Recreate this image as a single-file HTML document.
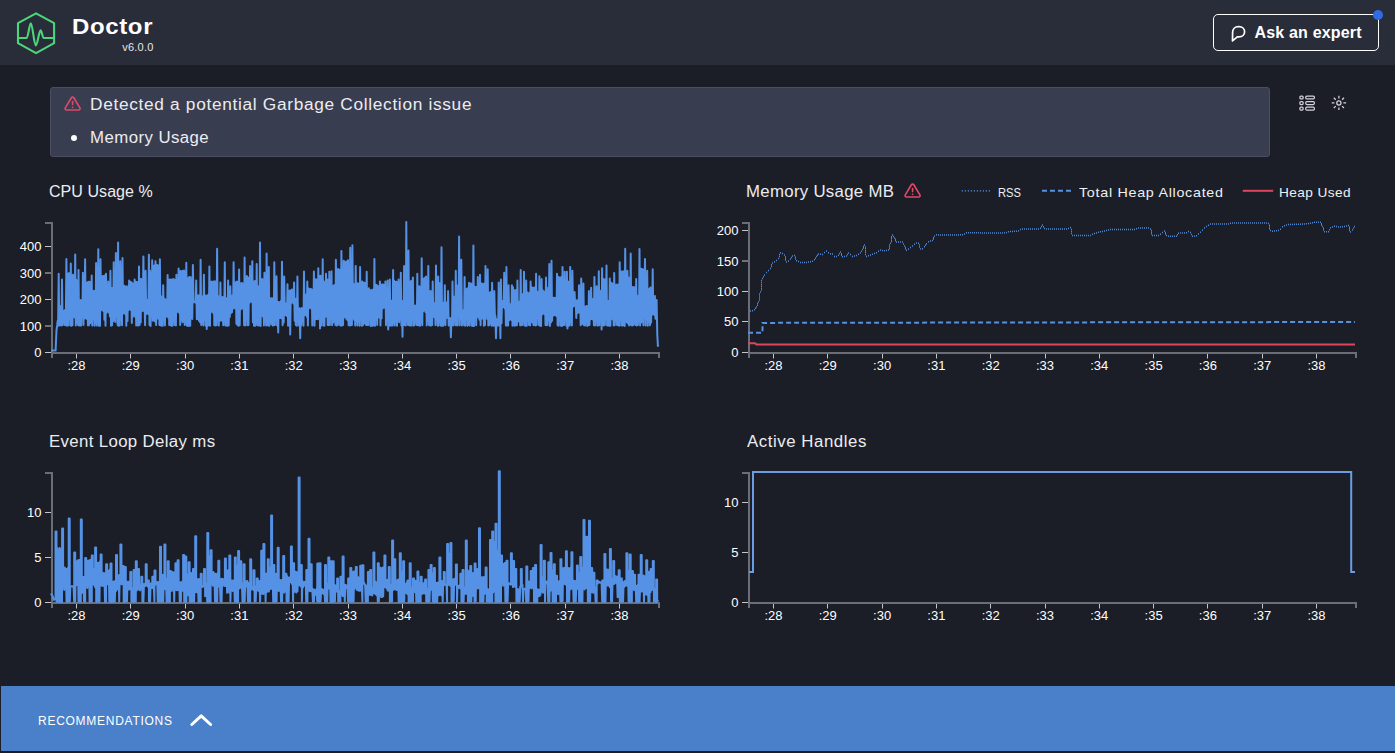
<!DOCTYPE html>
<html lang="en">
<head>
<meta charset="utf-8">
<title>Clinic.js Doctor</title>
<style>
*{box-sizing:border-box;margin:0;padding:0}
html,body{width:1395px;height:753px;overflow:hidden;background:#1b1e27;color:#fff;font-family:"Liberation Sans",sans-serif}
body{position:relative}
.abs{position:absolute}
#header{position:absolute;left:0;top:0;width:1395px;height:65px;background:#292d39}
#logo{position:absolute;left:0;top:0}
#title{position:absolute;left:72px;top:12.7px;font-weight:bold;font-size:22.3px;line-height:28px;letter-spacing:0.6px;white-space:nowrap;transform:scaleX(1.075);transform-origin:left center}
#version{position:absolute;left:99.6px;width:54px;text-align:right;top:41px;font-size:11px;line-height:13px;color:#e6e6e9;white-space:nowrap;letter-spacing:0.24px}
#ask{position:absolute;left:1213px;top:14px;width:166px;height:37px;border:1px solid #fff;border-radius:5px}
#ask span{position:absolute;left:40.5px;top:8px;font-weight:bold;font-size:16px;line-height:20px;white-space:nowrap;letter-spacing:0.18px}
#ask svg{position:absolute;left:15px;top:9px}
#dot{position:absolute;left:1373.3px;top:10.2px;width:10px;height:10px;border-radius:50%;background:#2f6be3}
#alert{position:absolute;left:50px;top:87px;width:1220px;height:70px;background:#393d50;border:1px solid #4a4e60;border-radius:3px}
#alert .t1{color:#ececf0;position:absolute;left:39px;top:7px;font-size:16px;line-height:20px;white-space:nowrap;letter-spacing:0.63px;transform:scaleX(1.08);transform-origin:left center}
#alert .t2{color:#ececf0;position:absolute;left:39px;top:40px;font-size:16px;line-height:20px;white-space:nowrap;letter-spacing:0.414px;transform:scaleX(1.05);transform-origin:left center}
#alert .bullet{position:absolute;left:20px;top:47px;width:6px;height:6px;border-radius:50%;background:#fff}
.ctitle{position:absolute;font-size:16px;line-height:20px;white-space:nowrap;color:#ececf0;transform-origin:left center}
.leg{position:absolute;font-size:13px;line-height:16px;white-space:nowrap;color:#f0f0f3;transform-origin:left center}
#reco{position:absolute;left:1px;top:686px;width:1394px;height:65px;background:#4980c9}
#reco span{position:absolute;left:37px;top:28px;font-size:12px;line-height:14px;letter-spacing:0.73px;white-space:nowrap;color:#fff}
#reco svg{position:absolute;left:187px;top:24px}
svg text{font-family:"Liberation Sans",sans-serif;font-size:13px;fill:#fff}
</style>
</head>
<body>
<div id="header">
  <svg id="logo" width="70" height="65" viewBox="0 0 70 65" fill="none" stroke="#4cd67a" stroke-width="2.1" stroke-linejoin="round" stroke-linecap="round">
    <path d="M36.05 13.3 L54.1 23.2 V43.2 L36.05 53.1 L18 43.2 V23.2 Z"/>
    <path d="M18 38 H26.6 C28.2 38 29.4 23.3 30.8 23.3 C32.6 23.3 34 45.4 35.8 45.4 C37.5 45.4 39 30.3 40.6 30.3 C41.8 30.3 42.4 38 43.7 38 H54.1"/>
  </svg>
  <div id="title">Doctor</div>
  <div id="version">v6.0.0</div>
  <div id="ask">
    <svg width="20" height="20" viewBox="0 0 20 20" fill="none" stroke="#fff" stroke-width="1.7" stroke-linejoin="round" stroke-linecap="round"><path d="M3.5 16.9 L3.6 8.4 C3.6 5 6 2.7 9.4 2.7 H10 C13.3 2.7 15.6 4.8 15.6 7.8 C15.6 10.8 13.3 12.9 10 12.9 H8.3 Z"/></svg>
    <span>Ask an expert</span>
  </div>
  <div id="dot"></div>
</div>
<div id="alert">
  <svg class="abs" style="left:13.3px;top:7.3px" width="17.2" height="17.2" viewBox="0 0 24 24" fill="none" stroke="#dd4a68" stroke-width="2.3" stroke-linejoin="round" stroke-linecap="round"><path d="M10.29 3.86L1.82 18a2 2 0 0 0 1.71 3h16.94a2 2 0 0 0 1.71-3L13.71 3.86a2 2 0 0 0-3.42 0z"/><path d="M12 9.2v4.2"/><path d="M12 17.2v0.1"/></svg>
  <div class="t1">Detected a potential Garbage Collection issue</div>
  <div class="bullet"></div>
  <div class="t2">Memory Usage</div>
</div>
<svg class="abs" style="left:1290px;top:88px" width="70" height="32" viewBox="0 0 70 32" fill="none" stroke="#d4d4da" stroke-width="1.25">
  <rect x="9.9" y="8.0" width="3.2" height="2.9" rx="1"/><rect x="15.7" y="8.0" width="8.7" height="2.9" rx="1.2"/><rect x="9.9" y="13.6" width="3.2" height="2.9" rx="1"/><rect x="15.7" y="13.6" width="8.7" height="2.9" rx="1.2"/><rect x="9.9" y="19.2" width="3.2" height="2.9" rx="1"/><rect x="15.7" y="19.2" width="8.7" height="2.9" rx="1.2"/>
  <circle cx="48.9" cy="14.9" r="2.1"/>
  <path d="M53.40 14.90L56.10 14.90M52.08 18.08L53.99 19.99M48.90 19.40L48.90 22.10M45.72 18.08L43.81 19.99M44.40 14.90L41.70 14.90M45.72 11.72L43.81 9.81M48.90 10.40L48.90 7.70M52.08 11.72L53.99 9.81"/>
</svg>

<div class="ctitle" style="left:49px;top:182px;letter-spacing:0.06px">CPU Usage %</div>
<div class="ctitle" style="left:746px;top:182px;letter-spacing:0.286px;transform:scaleX(1.05)">Memory Usage MB</div>
<svg class="abs" style="left:904.3px;top:182.3px" width="17.2" height="17.2" viewBox="0 0 24 24" fill="none" stroke="#dd4a68" stroke-width="2.3" stroke-linejoin="round" stroke-linecap="round"><path d="M10.29 3.86L1.82 18a2 2 0 0 0 1.71 3h16.94a2 2 0 0 0 1.71-3L13.71 3.86a2 2 0 0 0-3.42 0z"/><path d="M12 9.2v4.2"/><path d="M12 17.2v0.1"/></svg>
<div class="ctitle" style="left:49px;top:432px;letter-spacing:0.336px;transform:scaleX(1.05)">Event Loop Delay ms</div>
<div class="ctitle" style="left:746.6px;top:432px;letter-spacing:0.53px;transform:scaleX(1.05)">Active Handles</div>

<div class="leg" style="left:998px;top:185px;transform:scaleX(0.86)">RSS</div>
<div class="leg" style="left:1078.6px;top:185px;letter-spacing:0.65px;transform:scaleX(1.1)">Total Heap Allocated</div>
<div class="leg" style="left:1279px;top:185px;letter-spacing:0.39px;transform:scaleX(1.05)">Heap Used</div>

<svg class="abs" style="left:0;top:0" width="1395" height="753" viewBox="0 0 1395 753">
<path d="M45 352.5H51" stroke="#c4c5cb" stroke-width="1"/>
<text x="41.4" y="357.2" text-anchor="end">0</text>
<path d="M45 326H51" stroke="#c4c5cb" stroke-width="1"/>
<text x="41.4" y="330.7" text-anchor="end">100</text>
<path d="M45 299.5H51" stroke="#c4c5cb" stroke-width="1"/>
<text x="41.4" y="304.2" text-anchor="end">200</text>
<path d="M45 273H51" stroke="#c4c5cb" stroke-width="1"/>
<text x="41.4" y="277.7" text-anchor="end">300</text>
<path d="M45 246.5H51" stroke="#c4c5cb" stroke-width="1"/>
<text x="41.4" y="251.2" text-anchor="end">400</text>
<path d="M76.5 353V358.5" stroke="#c4c5cb" stroke-width="1"/>
<text x="76.5" y="370.2" text-anchor="middle">:28</text>
<path d="M130.5 353V358.5" stroke="#c4c5cb" stroke-width="1"/>
<text x="130.8" y="370.2" text-anchor="middle">:29</text>
<path d="M185.5 353V358.5" stroke="#c4c5cb" stroke-width="1"/>
<text x="185.1" y="370.2" text-anchor="middle">:30</text>
<path d="M239.5 353V358.5" stroke="#c4c5cb" stroke-width="1"/>
<text x="239.4" y="370.2" text-anchor="middle">:31</text>
<path d="M293.5 353V358.5" stroke="#c4c5cb" stroke-width="1"/>
<text x="293.7" y="370.2" text-anchor="middle">:32</text>
<path d="M348.5 353V358.5" stroke="#c4c5cb" stroke-width="1"/>
<text x="348.0" y="370.2" text-anchor="middle">:33</text>
<path d="M402.5 353V358.5" stroke="#c4c5cb" stroke-width="1"/>
<text x="402.3" y="370.2" text-anchor="middle">:34</text>
<path d="M456.5 353V358.5" stroke="#c4c5cb" stroke-width="1"/>
<text x="456.6" y="370.2" text-anchor="middle">:35</text>
<path d="M510.5 353V358.5" stroke="#c4c5cb" stroke-width="1"/>
<text x="510.9" y="370.2" text-anchor="middle">:36</text>
<path d="M565.5 353V358.5" stroke="#c4c5cb" stroke-width="1"/>
<text x="565.2" y="370.2" text-anchor="middle">:37</text>
<path d="M619.5 353V358.5" stroke="#c4c5cb" stroke-width="1"/>
<text x="619.5" y="370.2" text-anchor="middle">:38</text>
<path d="M45 223H52V353" fill="none" stroke="#6c6e77" stroke-width="2"/>
<path d="M52 358V353H659V358" fill="none" stroke="#6c6e77" stroke-width="2"/>
<path d="M742 352.5H748" stroke="#c4c5cb" stroke-width="1"/>
<text x="738.4" y="357.2" text-anchor="end">0</text>
<path d="M742 321.5H748" stroke="#c4c5cb" stroke-width="1"/>
<text x="738.4" y="326.2" text-anchor="end">50</text>
<path d="M742 291.5H748" stroke="#c4c5cb" stroke-width="1"/>
<text x="738.4" y="296.2" text-anchor="end">100</text>
<path d="M742 261H748" stroke="#c4c5cb" stroke-width="1"/>
<text x="738.4" y="265.7" text-anchor="end">150</text>
<path d="M742 230.5H748" stroke="#c4c5cb" stroke-width="1"/>
<text x="738.4" y="235.2" text-anchor="end">200</text>
<path d="M773.5 353V358.5" stroke="#c4c5cb" stroke-width="1"/>
<text x="773.5" y="370.2" text-anchor="middle">:28</text>
<path d="M827.5 353V358.5" stroke="#c4c5cb" stroke-width="1"/>
<text x="827.8" y="370.2" text-anchor="middle">:29</text>
<path d="M882.5 353V358.5" stroke="#c4c5cb" stroke-width="1"/>
<text x="882.1" y="370.2" text-anchor="middle">:30</text>
<path d="M936.5 353V358.5" stroke="#c4c5cb" stroke-width="1"/>
<text x="936.4" y="370.2" text-anchor="middle">:31</text>
<path d="M990.5 353V358.5" stroke="#c4c5cb" stroke-width="1"/>
<text x="990.7" y="370.2" text-anchor="middle">:32</text>
<path d="M1045.5 353V358.5" stroke="#c4c5cb" stroke-width="1"/>
<text x="1045.0" y="370.2" text-anchor="middle">:33</text>
<path d="M1099.5 353V358.5" stroke="#c4c5cb" stroke-width="1"/>
<text x="1099.3" y="370.2" text-anchor="middle">:34</text>
<path d="M1153.5 353V358.5" stroke="#c4c5cb" stroke-width="1"/>
<text x="1153.6" y="370.2" text-anchor="middle">:35</text>
<path d="M1207.5 353V358.5" stroke="#c4c5cb" stroke-width="1"/>
<text x="1207.9" y="370.2" text-anchor="middle">:36</text>
<path d="M1262.5 353V358.5" stroke="#c4c5cb" stroke-width="1"/>
<text x="1262.2" y="370.2" text-anchor="middle">:37</text>
<path d="M1316.5 353V358.5" stroke="#c4c5cb" stroke-width="1"/>
<text x="1316.5" y="370.2" text-anchor="middle">:38</text>
<path d="M742 223H749V353" fill="none" stroke="#6c6e77" stroke-width="2"/>
<path d="M749 358V353H1356V358" fill="none" stroke="#6c6e77" stroke-width="2"/>
<path d="M45 602.5H51" stroke="#c4c5cb" stroke-width="1"/>
<text x="41.4" y="607.2" text-anchor="end">0</text>
<path d="M45 557.5H51" stroke="#c4c5cb" stroke-width="1"/>
<text x="41.4" y="562.2" text-anchor="end">5</text>
<path d="M45 512.5H51" stroke="#c4c5cb" stroke-width="1"/>
<text x="41.4" y="517.2" text-anchor="end">10</text>
<path d="M76.5 603V608.5" stroke="#c4c5cb" stroke-width="1"/>
<text x="76.5" y="620.2" text-anchor="middle">:28</text>
<path d="M130.5 603V608.5" stroke="#c4c5cb" stroke-width="1"/>
<text x="130.8" y="620.2" text-anchor="middle">:29</text>
<path d="M185.5 603V608.5" stroke="#c4c5cb" stroke-width="1"/>
<text x="185.1" y="620.2" text-anchor="middle">:30</text>
<path d="M239.5 603V608.5" stroke="#c4c5cb" stroke-width="1"/>
<text x="239.4" y="620.2" text-anchor="middle">:31</text>
<path d="M293.5 603V608.5" stroke="#c4c5cb" stroke-width="1"/>
<text x="293.7" y="620.2" text-anchor="middle">:32</text>
<path d="M348.5 603V608.5" stroke="#c4c5cb" stroke-width="1"/>
<text x="348.0" y="620.2" text-anchor="middle">:33</text>
<path d="M402.5 603V608.5" stroke="#c4c5cb" stroke-width="1"/>
<text x="402.3" y="620.2" text-anchor="middle">:34</text>
<path d="M456.5 603V608.5" stroke="#c4c5cb" stroke-width="1"/>
<text x="456.6" y="620.2" text-anchor="middle">:35</text>
<path d="M510.5 603V608.5" stroke="#c4c5cb" stroke-width="1"/>
<text x="510.9" y="620.2" text-anchor="middle">:36</text>
<path d="M565.5 603V608.5" stroke="#c4c5cb" stroke-width="1"/>
<text x="565.2" y="620.2" text-anchor="middle">:37</text>
<path d="M619.5 603V608.5" stroke="#c4c5cb" stroke-width="1"/>
<text x="619.5" y="620.2" text-anchor="middle">:38</text>
<path d="M45 473H52V603" fill="none" stroke="#6c6e77" stroke-width="2"/>
<path d="M52 608V603H659V608" fill="none" stroke="#6c6e77" stroke-width="2"/>
<path d="M742 602.5H748" stroke="#c4c5cb" stroke-width="1"/>
<text x="738.4" y="607.2" text-anchor="end">0</text>
<path d="M742 552.5H748" stroke="#c4c5cb" stroke-width="1"/>
<text x="738.4" y="557.2" text-anchor="end">5</text>
<path d="M742 502.5H748" stroke="#c4c5cb" stroke-width="1"/>
<text x="738.4" y="507.2" text-anchor="end">10</text>
<path d="M773.5 603V608.5" stroke="#c4c5cb" stroke-width="1"/>
<text x="773.5" y="620.2" text-anchor="middle">:28</text>
<path d="M827.5 603V608.5" stroke="#c4c5cb" stroke-width="1"/>
<text x="827.8" y="620.2" text-anchor="middle">:29</text>
<path d="M882.5 603V608.5" stroke="#c4c5cb" stroke-width="1"/>
<text x="882.1" y="620.2" text-anchor="middle">:30</text>
<path d="M936.5 603V608.5" stroke="#c4c5cb" stroke-width="1"/>
<text x="936.4" y="620.2" text-anchor="middle">:31</text>
<path d="M990.5 603V608.5" stroke="#c4c5cb" stroke-width="1"/>
<text x="990.7" y="620.2" text-anchor="middle">:32</text>
<path d="M1045.5 603V608.5" stroke="#c4c5cb" stroke-width="1"/>
<text x="1045.0" y="620.2" text-anchor="middle">:33</text>
<path d="M1099.5 603V608.5" stroke="#c4c5cb" stroke-width="1"/>
<text x="1099.3" y="620.2" text-anchor="middle">:34</text>
<path d="M1153.5 603V608.5" stroke="#c4c5cb" stroke-width="1"/>
<text x="1153.6" y="620.2" text-anchor="middle">:35</text>
<path d="M1207.5 603V608.5" stroke="#c4c5cb" stroke-width="1"/>
<text x="1207.9" y="620.2" text-anchor="middle">:36</text>
<path d="M1262.5 603V608.5" stroke="#c4c5cb" stroke-width="1"/>
<text x="1262.2" y="620.2" text-anchor="middle">:37</text>
<path d="M1316.5 603V608.5" stroke="#c4c5cb" stroke-width="1"/>
<text x="1316.5" y="620.2" text-anchor="middle">:38</text>
<path d="M742 473H749V603" fill="none" stroke="#6c6e77" stroke-width="2"/>
<path d="M749 608V603H1356V608" fill="none" stroke="#6c6e77" stroke-width="2"/>
<path d="M961.8 190.8H990.4" stroke="#5591e4" stroke-width="1.2" stroke-dasharray="1.2 1.8"/>
<path d="M1042 190.8H1071.5" stroke="#5591e4" stroke-width="2" stroke-dasharray="5 3"/>
<path d="M1242.8 190.8H1273.2" stroke="#e0445f" stroke-width="2"/>
<path d="M749 572H753V472H1351.2V572H1355" fill="none" stroke="#6c9de3" stroke-width="2"/>
<path d="M51.0 350.6L55.6 350.6L56.5 330.0L57.2 325.4L57.6 321.0L58.1 325.8L58.7 273.7L59.2 325.4L59.8 306.0L60.4 325.2L60.9 307.3L61.5 325.5L62.0 279.5L62.6 325.1L63.1 310.7L63.7 321.3L64.2 310.8L64.8 324.9L65.3 309.8L65.8 325.2L66.4 258.9L67.0 325.8L67.5 273.5L68.0 325.4L68.6 273.2L69.2 319.2L69.7 273.3L70.2 325.5L70.8 263.5L71.4 325.8L71.9 275.4L72.5 325.3L73.0 274.8L73.5 317.1L74.1 276.6L74.7 317.5L75.2 254.5L75.8 325.4L76.3 279.7L76.8 322.6L77.4 281.4L78.0 324.9L78.5 269.9L79.1 325.5L79.6 301.2L80.2 325.5L80.7 300.1L81.2 325.6L81.8 300.3L82.4 316.0L82.9 272.8L83.5 324.9L84.0 287.7L84.6 318.5L85.1 259.3L85.7 318.0L86.2 282.8L86.8 319.0L87.3 282.4L87.9 325.3L88.4 281.8L89.0 325.3L89.5 281.8L90.1 323.2L90.6 282.4L91.2 322.3L91.7 275.6L92.2 325.5L92.8 290.5L93.3 319.0L93.9 291.7L94.5 325.7L95.0 290.8L95.6 322.5L96.1 263.1L96.7 325.6L97.2 275.4L97.8 317.3L98.3 249.3L98.8 325.7L99.4 274.1L100.0 325.8L100.5 259.3L101.1 310.2L101.6 276.6L102.2 309.3L102.7 275.9L103.2 310.9L103.8 275.9L104.4 319.7L104.9 275.6L105.5 325.7L106.0 273.7L106.6 312.7L107.1 307.1L107.7 311.3L108.2 281.4L108.8 312.5L109.3 298.1L109.9 316.5L110.4 270.8L111.0 325.7L111.5 287.7L112.1 325.2L112.6 288.1L113.2 321.3L113.7 262.2L114.2 319.9L114.8 269.7L115.4 321.9L115.9 253.1L116.5 315.8L117.0 266.2L117.6 325.3L118.1 242.5L118.7 325.8L119.2 301.1L119.8 325.6L120.3 261.2L120.9 320.0L121.4 269.0L122.0 325.2L122.5 258.1L123.1 313.3L123.6 285.5L124.2 313.2L124.7 286.0L125.2 314.0L125.8 287.3L126.3 325.8L126.9 286.2L127.5 320.9L128.0 288.0L128.6 310.1L129.1 280.5L129.7 309.3L130.2 281.7L130.8 310.0L131.3 282.3L131.8 323.0L132.4 283.2L133.0 316.4L133.5 284.2L134.1 315.1L134.6 279.5L135.2 316.9L135.7 281.7L136.2 325.4L136.8 282.1L137.3 325.3L137.9 282.1L138.5 325.4L139.0 266.6L139.6 325.1L140.1 278.8L140.7 322.5L141.2 279.1L141.8 311.2L142.3 279.8L142.8 310.3L143.4 256.6L144.0 311.2L144.5 301.4L145.1 325.2L145.6 270.8L146.2 314.0L146.7 300.7L147.2 313.2L147.8 299.7L148.4 314.3L148.9 254.7L149.5 325.0L150.0 270.6L150.6 325.9L151.1 273.0L151.7 315.8L152.2 260.2L152.8 320.7L153.3 266.7L153.9 319.9L154.4 265.5L155.0 321.6L155.5 261.2L156.1 325.1L156.6 265.1L157.2 317.4L157.7 265.3L158.2 318.7L158.8 265.5L159.4 325.0L159.9 259.3L160.5 325.3L161.0 296.8L161.6 325.7L162.1 296.2L162.7 325.7L163.2 285.3L163.8 315.4L164.3 298.6L164.9 325.4L165.4 299.6L166.0 316.8L166.5 299.9L167.1 316.1L167.6 275.1L168.2 317.7L168.7 280.2L169.2 325.0L169.8 279.4L170.4 325.3L170.9 279.5L171.5 325.8L172.0 280.0L172.6 325.8L173.1 279.0L173.7 322.1L174.2 279.5L174.8 325.0L175.3 280.6L175.9 325.6L176.4 274.7L177.0 312.1L177.5 298.6L178.1 311.3L178.6 268.5L179.2 313.1L179.7 271.6L180.2 324.9L180.8 271.0L181.4 320.1L181.9 271.4L182.5 322.3L183.0 270.7L183.6 321.5L184.1 270.4L184.7 324.9L185.2 272.4L185.8 319.1L186.3 262.7L186.8 325.6L187.4 279.1L188.0 325.9L188.5 277.4L189.1 325.7L189.6 277.0L190.2 325.7L190.7 277.2L191.2 317.3L191.8 302.8L192.3 318.9L192.9 265.1L193.5 302.4L194.0 301.6L194.6 301.6L195.1 301.6L195.7 302.7L196.2 280.5L196.8 319.2L197.3 295.8L197.8 319.0L198.4 295.2L199.0 320.7L199.5 295.2L200.1 322.3L200.6 259.7L201.2 325.0L201.7 297.3L202.2 320.7L202.8 296.2L203.3 325.6L203.9 274.7L204.5 320.1L205.0 296.3L205.6 325.6L206.1 295.6L206.7 329.0L207.2 296.0L207.8 325.8L208.3 294.5L208.8 325.0L209.4 266.4L210.0 325.8L210.5 282.0L211.1 312.1L211.6 281.4L212.2 311.3L212.7 282.3L213.2 313.0L213.8 281.6L214.3 325.2L214.9 281.2L215.5 325.6L216.0 283.3L216.6 325.2L217.1 248.7L217.7 319.6L218.2 296.1L218.8 325.5L219.3 296.0L219.8 321.1L220.4 282.4L221.0 319.9L221.5 297.2L222.1 320.7L222.6 297.1L223.2 325.2L223.7 298.3L224.2 318.8L224.8 262.2L225.3 325.4L225.9 298.5L226.5 325.4L227.0 298.1L227.6 325.7L228.1 280.5L228.7 325.4L229.2 298.0L229.8 317.1L230.3 286.2L230.8 313.2L231.4 297.5L232.0 312.2L232.5 295.3L233.1 308.5L233.6 262.2L234.2 307.4L234.7 282.3L235.2 308.6L235.8 282.2L236.4 323.7L236.9 281.5L237.5 325.1L238.0 282.6L238.6 325.8L239.1 269.5L239.7 325.2L240.2 285.0L240.8 309.3L241.3 282.9L241.9 308.4L242.4 283.3L243.0 308.5L243.5 283.8L244.1 325.2L244.6 257.4L245.2 325.5L245.7 277.5L246.2 319.0L246.8 275.9L247.4 325.3L247.9 277.5L248.5 325.1L249.0 277.4L249.6 302.8L250.1 266.0L250.7 301.6L251.2 282.5L251.8 302.0L252.3 261.2L252.9 322.3L253.4 283.1L254.0 325.8L254.5 281.2L255.1 325.8L255.6 280.8L256.2 322.9L256.7 264.1L257.2 325.2L257.8 286.0L258.4 325.6L258.9 286.4L259.5 325.2L260.0 242.5L260.6 325.9L261.1 279.9L261.7 315.3L262.2 279.1L262.8 316.6L263.3 280.1L263.9 325.6L264.4 272.8L265.0 322.0L265.5 287.7L266.1 325.5L266.6 253.5L267.2 325.1L267.7 287.5L268.2 325.6L268.8 267.0L269.4 325.8L269.9 299.1L270.5 322.0L271.0 298.3L271.6 324.2L272.1 298.3L272.7 325.5L273.2 299.2L273.8 325.2L274.3 262.2L274.9 325.0L275.4 295.1L276.0 320.2L276.5 276.2L277.1 325.6L277.6 301.8L278.2 332.4L278.7 302.1L279.2 317.1L279.8 302.5L280.4 318.1L280.9 300.9L281.5 318.2L282.0 261.8L282.6 325.2L283.1 284.8L283.7 322.4L284.2 276.6L284.8 315.2L285.3 305.0L285.9 315.1L286.4 303.3L287.0 316.3L287.5 284.3L288.1 325.7L288.6 291.3L289.2 321.9L289.7 290.5L290.2 334.4L290.8 290.6L291.4 303.0L291.9 289.6L292.5 301.6L293.0 289.6L293.6 303.6L294.1 282.4L294.7 320.7L295.2 299.6L295.8 325.1L296.3 298.6L296.9 325.7L297.4 276.6L298.0 318.1L298.5 310.1L299.1 325.8L299.6 308.3L300.2 338.2L300.7 309.4L301.2 325.5L301.8 308.1L302.4 320.0L302.9 308.3L303.5 325.8L304.0 271.4L304.6 315.3L305.1 294.4L305.7 315.1L306.2 294.6L306.8 316.8L307.3 281.4L307.9 325.4L308.4 288.5L309.0 308.2L309.5 289.5L310.1 307.4L310.6 288.7L311.2 308.4L311.7 289.5L312.3 325.5L312.8 291.0L313.4 317.5L313.9 271.4L314.5 325.7L315.0 279.6L315.6 319.2L316.1 279.3L316.7 319.0L317.2 280.3L317.8 319.2L318.3 268.3L318.9 317.4L319.4 276.2L320.0 328.6L320.5 275.7L321.1 325.8L321.6 276.1L322.2 320.8L322.7 259.3L323.3 325.6L323.8 281.3L324.4 325.7L324.9 283.0L325.5 316.8L326.0 273.7L326.6 316.5L327.1 279.4L327.7 325.0L328.2 280.1L328.8 325.0L329.3 271.8L329.9 325.1L330.4 293.1L331.0 317.5L331.5 271.2L332.1 325.3L332.6 286.3L333.2 322.5L333.7 285.5L334.3 321.6L334.8 285.1L335.4 325.1L335.9 259.7L336.5 325.6L337.0 269.8L337.6 325.3L338.1 268.9L338.7 323.3L339.2 270.5L339.8 324.9L340.3 269.5L340.9 325.7L341.4 251.0L342.0 325.4L342.5 275.0L343.1 325.1L343.6 260.8L344.2 317.5L344.7 261.5L345.3 317.0L345.8 262.7L346.4 318.9L346.9 261.6L347.5 320.2L348.0 260.2L348.6 325.3L349.1 279.0L349.7 325.6L350.2 247.7L350.8 325.3L351.3 269.0L351.9 324.9L352.4 245.2L353.0 317.7L353.5 283.7L354.1 319.8L354.6 283.9L355.2 325.5L355.7 266.0L356.3 321.2L356.8 282.9L357.4 325.6L357.9 283.6L358.5 321.4L359.0 283.5L359.6 325.8L360.1 267.0L360.7 318.1L361.2 303.0L361.8 325.7L362.3 281.4L362.9 325.2L363.4 282.7L364.0 323.0L364.5 282.8L365.1 323.8L365.6 282.7L366.2 324.9L366.7 271.8L367.3 325.1L367.8 300.6L368.4 325.0L368.9 288.2L369.5 318.2L370.0 290.6L370.6 325.9L371.1 290.1L371.7 325.7L372.2 290.6L372.8 325.8L373.3 289.2L373.9 325.2L374.4 258.9L375.0 325.8L375.5 284.5L376.1 320.1L376.6 285.0L377.2 325.0L377.7 285.9L378.3 317.0L378.8 286.4L379.4 317.7L379.9 281.4L380.5 325.6L381.0 284.8L381.6 318.6L382.1 284.5L382.7 308.5L383.2 284.5L383.8 307.4L384.3 285.0L384.9 307.7L385.4 281.4L386.0 325.2L386.5 300.7L387.1 317.8L387.6 280.5L388.2 329.6L388.7 294.7L389.3 325.4L389.8 279.5L390.4 325.6L390.9 300.5L391.5 325.4L392.0 302.7L392.6 325.6L393.1 269.9L393.7 322.9L394.2 280.7L394.8 325.5L395.3 281.9L395.9 321.3L396.4 281.7L397.0 325.8L397.5 282.7L398.1 320.2L398.6 279.5L399.2 322.2L399.7 300.8L400.3 319.2L400.8 272.8L401.4 325.5L401.9 300.8L402.5 336.7L403.0 301.1L403.6 325.1L404.1 266.0L404.7 325.1L405.2 275.5L405.8 325.5L406.3 222.1L406.9 321.4L407.4 261.7L408.0 325.1L408.5 250.6L409.1 325.3L409.6 281.8L410.2 325.5L410.7 281.3L411.3 325.4L411.8 280.8L412.4 319.3L412.9 277.6L413.5 325.7L414.0 307.1L414.6 324.9L415.1 305.6L415.7 320.5L416.2 306.9L416.8 325.0L417.3 273.7L417.9 325.1L418.4 286.6L419.0 325.5L419.5 286.3L420.1 325.7L420.6 287.3L421.2 322.4L421.7 258.3L422.3 325.3L422.8 278.2L423.4 311.2L423.9 279.5L424.5 310.3L425.0 277.8L425.6 312.3L426.1 276.6L426.7 325.6L427.2 286.3L427.8 320.8L428.3 266.0L428.9 325.0L429.4 291.7L430.0 325.6L430.5 290.9L431.1 325.5L431.6 291.7L432.2 325.1L432.7 281.4L433.3 316.6L433.8 303.9L434.4 317.2L434.9 303.1L435.5 325.1L436.0 265.4L436.6 319.4L437.1 291.8L437.7 325.8L438.2 276.6L438.8 325.5L439.3 283.3L439.9 322.1L440.4 282.9L441.0 325.8L441.5 247.3L442.1 325.8L442.6 302.8L443.2 325.7L443.7 302.5L444.3 323.4L444.8 285.3L445.4 325.2L445.9 304.7L446.5 316.6L447.0 302.2L447.6 317.9L448.1 291.1L448.7 325.4L449.2 318.0L449.8 324.9L450.3 318.6L450.9 337.3L451.4 317.7L452.0 325.2L452.5 281.4L453.1 325.6L453.6 296.4L454.2 320.7L454.7 296.4L455.3 325.3L455.8 270.8L456.4 325.1L456.9 285.3L457.5 325.6L458.0 285.9L458.6 316.9L459.1 236.6L459.7 325.3L460.2 271.8L460.8 319.1L461.3 259.7L461.9 325.4L462.4 310.1L463.0 321.1L463.5 310.1L464.1 325.2L464.6 277.0L465.2 325.8L465.7 289.4L466.3 318.0L466.8 288.7L467.4 325.7L467.9 288.2L468.5 325.0L469.0 282.8L469.6 325.4L470.1 283.4L470.7 321.4L471.2 283.4L471.8 325.7L472.3 284.0L472.9 325.9L473.4 245.4L474.0 325.9L474.5 286.6L475.1 317.7L475.6 287.4L476.2 325.3L476.7 286.8L477.3 315.9L477.8 277.0L478.4 317.5L478.9 293.3L479.5 319.7L480.0 274.7L480.6 325.3L481.1 283.2L481.7 318.4L482.2 283.7L482.8 318.6L483.3 283.9L483.9 325.8L484.4 283.4L485.0 325.1L485.5 266.0L486.1 316.6L486.6 287.0L487.2 319.1L487.7 269.3L488.3 325.5L488.8 292.9L489.4 325.1L489.9 292.6L490.5 322.9L491.0 292.1L491.6 325.8L492.1 282.8L492.7 325.6L493.2 314.3L493.8 325.7L494.3 291.1L494.9 315.7L495.4 315.7L496.0 338.2L496.5 319.2L497.1 325.6L497.6 320.8L498.2 325.4L498.7 282.4L499.3 325.3L499.8 300.7L500.4 338.2L500.9 279.5L501.5 323.2L502.0 300.8L502.6 307.3L503.1 301.9L503.7 307.0L504.2 272.8L504.8 308.4L505.3 295.3L505.9 325.5L506.4 267.0L507.0 325.5L507.5 308.8L508.1 325.4L508.6 285.3L509.2 320.2L509.7 304.8L510.3 319.0L510.8 304.0L511.4 320.0L511.9 285.3L512.5 325.8L513.0 287.2L513.6 318.9L514.1 290.3L514.6 325.8L515.2 290.4L515.8 325.3L516.3 290.0L516.9 325.2L517.4 280.5L518.0 321.6L518.5 303.1L519.1 319.6L519.6 301.4L520.1 325.2L520.7 269.9L521.2 325.2L521.8 296.2L522.4 325.0L522.9 293.9L523.5 321.5L524.0 271.8L524.6 325.4L525.1 303.2L525.6 325.7L526.2 280.5L526.8 325.7L527.3 292.3L527.9 320.6L528.4 294.0L529.0 325.0L529.5 292.4L530.1 325.4L530.6 281.4L531.1 321.6L531.7 287.3L532.2 322.6L532.8 288.3L533.4 325.0L533.9 287.8L534.5 325.1L535.0 287.3L535.6 325.6L536.1 273.7L536.6 325.0L537.2 291.5L537.8 318.2L538.3 291.9L538.9 325.1L539.4 276.2L540.0 325.8L540.5 296.5L541.1 325.9L541.6 278.9L542.1 314.4L542.7 290.2L543.2 313.2L543.8 291.7L544.4 314.2L544.9 291.6L545.5 325.0L546.0 277.6L546.6 325.3L547.1 289.7L547.6 325.0L548.2 287.5L548.8 320.2L549.3 264.1L549.9 325.9L550.4 284.1L551.0 322.4L551.5 260.8L552.1 320.7L552.6 299.9L553.2 315.5L553.7 297.8L554.2 315.2L554.8 297.8L555.4 315.1L555.9 299.0L556.5 316.2L557.0 273.7L557.6 325.3L558.1 276.7L558.7 325.7L559.2 277.6L559.8 320.4L560.3 277.6L560.9 325.7L561.4 277.2L562.0 325.9L562.5 267.0L563.1 325.1L563.6 287.8L564.2 325.1L564.7 271.8L565.2 319.7L565.8 283.6L566.4 325.8L566.9 271.8L567.5 328.6L568.0 281.4L568.6 325.7L569.1 281.8L569.7 325.6L570.2 267.0L570.8 322.0L571.3 290.8L571.9 325.4L572.4 270.8L573.0 306.7L573.5 305.5L574.1 305.5L574.6 292.0L575.2 306.2L575.7 301.1L576.3 318.0L576.8 300.3L577.4 313.3L577.9 302.5L578.5 312.2L579.0 285.3L579.6 312.7L580.1 295.6L580.7 325.2L581.2 278.5L581.8 323.9L582.3 304.4L582.9 323.4L583.4 283.4L584.0 325.2L584.5 308.4L585.1 325.4L585.6 306.4L586.2 317.3L586.7 306.1L587.3 325.9L587.8 306.1L588.4 325.3L588.9 291.1L589.5 325.0L590.0 304.9L590.6 319.2L591.1 287.8L591.7 319.0L592.2 298.8L592.8 319.4L593.3 299.1L593.9 325.3L594.4 277.0L595.0 325.4L595.5 299.6L596.1 321.3L596.6 286.2L597.2 325.6L597.7 308.7L598.3 325.2L598.8 271.2L599.4 325.3L599.9 290.6L600.5 317.6L601.0 292.1L601.6 329.6L602.1 268.3L602.7 325.1L603.2 278.8L603.8 325.5L604.3 279.9L604.9 325.0L605.4 279.0L606.0 319.0L606.5 265.4L607.1 325.4L607.6 301.3L608.2 325.4L608.7 300.7L609.3 325.7L609.8 278.5L610.4 325.8L610.9 282.7L611.5 318.4L612.0 283.2L612.6 319.5L613.1 283.9L613.7 325.4L614.2 273.1L614.8 325.2L615.3 285.6L615.9 321.0L616.4 284.5L617.0 325.0L617.5 285.7L618.1 325.3L618.6 284.3L619.2 325.7L619.7 262.2L620.3 320.3L620.8 271.8L621.4 325.4L621.9 271.6L622.5 325.5L623.0 271.8L623.6 325.3L624.1 271.1L624.7 325.9L625.2 248.7L625.8 321.5L626.3 306.8L626.9 322.5L627.4 270.8L628.0 323.4L628.5 277.6L629.1 325.4L629.6 278.8L630.2 324.0L630.7 253.5L631.3 325.2L631.8 287.8L632.4 325.5L632.9 287.1L633.5 325.1L634.0 286.9L634.6 323.2L635.1 288.2L635.7 324.9L636.2 278.9L636.8 325.4L637.3 296.5L637.9 325.0L638.4 295.5L639.0 321.6L639.5 249.1L640.1 325.4L640.6 268.6L641.2 322.6L641.7 268.9L642.3 321.7L642.8 269.2L643.4 325.2L643.9 270.6L644.5 317.6L645.0 258.9L645.6 325.5L646.1 278.6L646.7 319.2L647.2 270.8L647.8 325.8L648.3 289.4L648.9 321.5L649.4 288.7L650.0 325.3L650.5 287.6L651.1 322.6L651.6 287.4L652.2 314.6L652.7 269.3L653.3 314.2L653.8 313.7L654.4 314.9L654.9 295.9L655.5 318.8L656.0 318.8L656.6 300.0L657.3 335.0L657.9 346.0L658.6 345.0" fill="none" stroke="#5591e4" stroke-width="2" stroke-linejoin="round"/>
<path d="M50.5 594.0L52.0 594.5L54.0 600.0L55.5 598.0L55.5 531.4L56.5 531.4L56.5 601.8L57.1 548.1L57.6 601.7L58.2 550.2L58.8 601.8L59.3 548.1L59.9 601.9L60.4 548.6L61.0 601.5L61.5 548.6L62.0 601.9L62.1 528.5L63.1 528.5L63.1 587.5L63.7 567.6L64.2 589.9L64.8 567.4L65.3 586.9L65.9 568.9L66.5 601.4L67.0 569.1L67.5 601.9L68.1 567.5L68.7 601.3L68.7 518.5L69.7 518.5L69.8 601.6L70.3 586.8L70.8 586.8L71.4 586.2L72.0 586.2L72.5 586.2L73.0 586.8L73.6 586.8L74.2 601.8L74.2 552.6L75.2 552.6L75.2 601.6L75.8 561.9L76.3 585.1L76.9 561.3L77.5 585.1L78.0 560.2L78.5 601.8L79.1 559.9L79.7 601.6L80.2 559.8L80.8 601.8L80.8 519.5L81.8 519.5L81.8 592.9L82.4 577.4L83.0 592.5L83.5 576.9L84.0 601.6L84.6 576.6L85.2 601.7L85.2 558.0L86.2 558.0L86.2 585.7L86.8 560.6L87.3 588.0L87.9 561.2L88.5 585.4L89.0 560.4L89.6 601.7L90.1 560.0L90.7 601.5L91.2 559.6L91.8 601.5L91.8 555.5L92.8 555.5L92.8 584.5L93.4 570.0L94.0 585.0L94.5 569.0L95.1 587.3L95.1 547.4L96.1 547.4L96.2 601.8L96.7 562.4L97.2 601.7L97.8 562.8L98.3 601.6L98.9 562.9L99.5 601.7L100.0 561.4L100.6 583.6L100.6 554.5L101.6 554.5L101.7 585.7L102.2 573.8L102.8 585.9L103.3 573.1L103.8 583.9L104.4 573.2L105.0 601.8L105.5 574.8L106.1 601.8L106.1 564.2L107.1 564.2L107.2 584.1L107.7 570.9L108.2 584.5L108.8 570.7L109.3 601.8L109.9 569.4L110.5 601.7L110.5 563.6L111.5 563.6L111.6 601.9L112.1 582.1L112.7 601.6L113.2 581.8L113.8 601.8L114.3 581.3L114.8 601.6L115.4 581.8L116.0 591.0L116.0 555.1L117.0 555.1L117.1 589.4L117.6 575.2L118.2 589.2L118.7 575.3L119.2 601.6L119.8 574.8L120.4 582.1L120.4 544.5L121.4 544.5L121.5 584.3L122.0 579.3L122.6 583.9L122.6 566.1L123.6 566.1L123.7 601.7L124.2 582.3L124.8 601.7L124.8 567.0L125.8 567.0L125.9 601.3L126.4 581.9L127.0 601.4L127.5 581.8L128.1 589.6L128.6 581.7L129.2 589.3L129.7 582.0L130.2 589.3L130.3 571.9L131.3 571.9L131.4 601.5L131.9 589.0L132.4 601.7L133.0 587.9L133.6 601.8L133.6 569.9L134.6 569.9L134.7 601.5L135.2 588.0L135.8 601.5L135.8 561.3L136.8 561.3L136.9 590.3L137.4 584.7L137.9 588.6L138.0 569.0L139.0 569.0L139.1 589.8L139.6 589.8L140.2 590.4L140.7 585.3L141.2 585.3L141.3 576.7L142.3 576.7L142.4 601.6L142.9 585.2L143.4 601.7L144.0 583.9L144.6 583.9L145.1 583.9L145.7 586.0L145.7 564.2L146.7 564.2L146.8 583.9L147.3 583.9L147.9 586.7L147.9 580.5L148.9 580.5L148.9 601.3L149.5 583.2L150.1 601.6L150.6 583.6L151.2 587.3L151.7 584.0L152.2 588.0L152.3 576.7L153.3 576.7L153.4 587.8L153.9 587.8L154.4 601.5L154.5 570.5L155.5 570.5L155.6 584.4L156.1 583.2L156.7 583.2L157.2 582.1L157.8 601.5L158.3 582.0L158.9 601.6L159.4 582.3L159.9 601.5L160.0 546.8L161.0 546.8L161.1 601.6L161.6 575.8L162.2 601.6L162.7 574.8L163.2 601.7L163.8 575.6L164.4 589.1L164.4 544.5L165.4 544.5L165.4 589.0L166.0 578.6L166.6 601.6L167.1 579.4L167.7 601.9L167.7 561.3L168.7 561.3L168.8 601.4L169.3 585.1L169.9 601.4L169.9 570.9L170.9 570.9L170.9 591.2L171.5 573.7L172.1 589.1L172.6 571.9L173.2 591.0L173.7 573.4L174.2 601.4L174.8 572.1L175.4 589.6L175.4 563.2L176.4 563.2L176.4 590.3L177.0 580.8L177.6 589.9L177.6 560.3L178.6 560.3L178.7 589.7L179.2 582.8L179.8 601.7L180.3 582.3L180.9 601.5L181.4 582.3L182.0 590.8L182.5 581.5L183.1 590.7L183.1 555.1L184.1 555.1L184.2 601.8L184.7 564.2L185.2 601.6L185.3 556.5L186.3 556.5L186.4 601.7L186.9 574.8L187.5 594.6L188.0 574.5L188.6 595.4L188.6 562.2L189.6 562.2L189.7 601.4L190.2 573.4L190.8 601.8L191.3 573.0L191.9 601.8L192.4 574.4L193.0 601.6L193.0 569.0L194.0 569.0L194.1 601.8L194.6 579.9L195.2 590.8L195.2 536.2L196.2 536.2L196.2 592.2L196.8 579.1L197.4 592.2L197.9 579.3L198.5 601.7L199.0 578.9L199.6 601.3L200.1 579.1L200.7 601.8L200.7 573.8L201.7 573.8L201.8 586.6L202.3 585.9L202.9 586.9L203.4 585.8L204.0 585.8L204.0 569.0L205.0 569.0L205.1 596.2L205.6 584.0L206.2 594.0L206.7 583.4L207.2 601.9L207.3 533.0L208.3 533.0L208.4 601.4L208.9 556.3L209.5 601.9L210.0 555.9L210.6 601.7L210.6 550.3L211.6 550.3L211.7 584.1L212.2 573.7L212.8 585.8L213.3 571.9L213.9 584.1L214.4 573.6L215.0 601.3L215.5 573.8L216.1 601.7L216.6 574.5L217.2 601.4L217.7 573.2L218.2 586.7L218.3 560.7L219.3 560.7L219.4 584.9L219.9 581.4L220.5 601.5L221.0 579.0L221.6 601.7L222.1 578.7L222.7 585.8L223.2 579.3L223.8 585.2L224.3 580.3L224.9 585.9L224.9 558.4L225.9 558.4L226.0 585.9L226.5 570.1L227.1 592.7L227.6 570.7L228.2 590.0L228.7 570.1L229.2 592.8L229.3 555.5L230.3 555.5L230.4 601.4L230.9 581.3L231.5 590.4L232.0 580.6L232.6 590.9L233.1 580.6L233.7 589.9L234.2 582.3L234.8 601.4L234.8 557.4L235.8 557.4L235.9 601.6L236.4 566.2L237.0 601.8L237.5 565.3L238.1 601.7L238.1 551.1L239.1 551.1L239.2 588.4L239.7 572.8L240.3 587.8L240.3 561.3L241.3 561.3L241.4 587.8L241.9 584.0L242.5 601.7L243.0 583.5L243.6 601.4L243.6 564.2L244.6 564.2L244.7 601.5L245.2 582.0L245.8 584.6L246.3 581.3L246.9 586.7L247.4 580.9L248.0 601.4L248.5 583.0L249.1 601.7L249.6 582.9L250.2 601.6L250.2 559.3L251.2 559.3L251.3 589.5L251.8 587.1L252.4 588.6L252.9 587.5L253.5 590.0L253.5 570.3L254.5 570.3L254.6 601.3L255.1 586.3L255.7 601.3L256.2 588.3L256.8 589.4L256.8 578.6L257.8 578.6L257.9 590.6L258.4 581.9L259.0 591.3L259.5 581.0L260.1 601.6L260.6 581.9L261.1 593.0L261.2 550.7L262.2 550.7L262.2 593.7L262.8 567.2L263.4 594.0L263.4 543.9L264.4 543.9L264.5 591.8L265.0 573.6L265.6 601.5L266.1 574.6L266.6 592.0L267.2 573.1L267.8 591.5L267.8 559.3L268.8 559.3L268.9 591.6L269.4 567.3L270.0 589.3L270.5 568.2L271.1 588.7L271.1 515.4L272.1 515.4L272.1 587.5L272.7 578.5L273.2 601.7L273.3 565.1L274.3 565.1L274.4 601.7L274.9 575.0L275.5 601.4L276.0 573.7L276.6 601.3L277.1 574.4L277.6 590.1L277.7 547.8L278.7 547.8L278.8 590.9L279.3 579.7L279.9 589.4L280.4 580.3L281.0 601.5L281.5 580.0L282.1 601.7L282.6 580.1L283.1 589.9L283.2 555.9L284.2 555.9L284.2 592.6L284.8 582.4L285.4 590.7L285.4 573.8L286.4 573.8L286.5 601.3L287.0 575.9L287.6 601.8L288.1 577.5L288.6 601.3L289.2 577.5L289.8 582.7L290.3 577.3L290.9 581.9L290.9 546.4L291.9 546.4L292.0 584.0L292.5 570.9L293.1 601.6L293.1 563.2L294.1 563.2L294.1 591.9L294.7 571.6L295.2 591.6L295.8 571.7L296.4 592.6L296.9 572.2L297.5 591.3L298.0 572.2L298.6 585.4L298.6 477.5L299.6 477.5L299.6 585.1L300.2 582.0L300.8 586.5L300.8 565.1L301.8 565.1L301.9 601.6L302.4 580.8L303.0 587.3L303.5 582.3L304.1 585.6L304.6 582.0L305.2 585.3L305.7 581.4L306.2 601.4L306.3 569.9L307.3 569.9L307.4 601.6L307.9 579.1L308.5 590.1L308.5 538.7L309.5 538.7L309.6 590.9L310.1 574.1L310.7 591.2L310.7 564.2L311.7 564.2L311.8 589.4L312.3 588.6L312.9 601.4L313.4 589.4L314.0 601.5L314.5 589.7L315.1 593.9L315.6 590.7L316.2 594.9L316.7 588.6L317.2 601.3L317.3 563.6L318.3 563.6L318.4 601.4L318.9 582.6L319.5 601.6L319.5 563.2L320.5 563.2L320.6 601.3L321.1 588.6L321.7 593.7L322.2 589.3L322.8 593.3L323.3 589.9L323.9 594.0L324.4 589.5L325.0 601.5L325.0 565.1L326.0 565.1L326.1 601.6L326.6 584.1L327.2 601.7L327.7 583.7L328.2 586.6L328.3 557.4L329.3 557.4L329.4 588.8L329.9 572.0L330.5 601.9L330.5 561.3L331.5 561.3L331.6 601.7L332.1 579.6L332.7 601.8L332.7 561.3L333.7 561.3L333.8 601.4L334.3 584.6L334.9 601.4L335.4 585.6L336.0 590.8L336.5 585.8L337.1 591.7L337.1 578.6L338.1 578.6L338.2 601.6L338.7 590.7L339.2 601.3L339.8 591.0L340.4 601.5L340.4 576.7L341.4 576.7L341.5 594.3L342.0 592.3L342.6 596.1L342.6 556.6L343.6 556.6L343.7 595.8L344.2 585.6L344.8 601.3L345.3 584.7L345.9 588.0L346.4 585.5L347.0 587.5L347.5 586.0L348.1 601.4L348.1 578.6L349.1 578.6L349.2 601.6L349.7 589.1L350.2 601.8L350.3 568.0L351.3 568.0L351.4 601.5L351.9 572.7L352.5 601.6L353.0 571.8L353.6 601.6L354.1 571.4L354.7 588.7L355.2 571.3L355.8 587.4L355.8 567.0L356.8 567.0L356.9 590.1L357.4 576.6L358.0 590.2L358.5 577.4L359.1 590.7L359.6 577.5L360.2 590.7L360.2 565.7L361.2 565.7L361.2 590.2L361.8 584.1L362.4 601.4L362.4 565.3L363.4 565.3L363.5 582.6L364.0 582.6L364.6 584.4L365.1 584.4L365.7 601.4L366.2 586.1L366.8 601.4L367.3 585.3L367.9 601.8L367.9 571.9L368.9 571.9L369.0 595.0L369.5 587.0L370.1 594.6L370.1 569.9L371.1 569.9L371.2 594.9L371.7 587.6L372.2 595.4L372.8 587.8L373.4 593.2L373.4 552.6L374.4 552.6L374.5 593.2L375.0 581.3L375.6 594.3L376.1 582.5L376.7 595.3L377.2 582.0L377.8 601.8L377.8 563.2L378.8 563.2L378.9 601.3L379.4 568.6L380.0 594.5L380.5 567.8L381.1 597.0L381.6 568.8L382.2 597.1L382.7 567.6L383.2 596.3L383.8 568.5L384.4 587.1L384.4 555.5L385.4 555.5L385.5 587.2L386.0 579.7L386.6 588.5L387.1 580.4L387.7 590.6L388.2 579.3L388.8 590.7L388.8 567.0L389.8 567.0L389.9 601.7L390.4 585.7L391.0 601.6L391.5 584.5L392.1 601.3L392.1 540.5L393.1 540.5L393.2 589.9L393.7 570.0L394.2 589.0L394.3 559.3L395.3 559.3L395.4 589.6L395.9 581.4L396.5 590.0L397.0 580.5L397.6 588.0L398.1 579.4L398.7 601.7L399.2 579.4L399.8 601.8L399.8 553.2L400.8 553.2L400.9 601.8L401.4 573.2L402.0 601.7L402.5 571.6L403.1 601.6L403.1 561.3L404.1 561.3L404.2 601.4L404.7 583.6L405.2 592.4L405.8 584.4L406.4 593.1L406.9 582.5L407.5 594.2L407.5 580.5L408.5 580.5L408.6 601.8L409.1 590.4L409.7 601.7L409.7 563.2L410.7 563.2L410.8 601.4L411.3 587.6L411.9 601.6L412.4 587.6L413.0 601.5L413.0 578.6L414.0 578.6L414.1 592.3L414.6 581.5L415.2 591.1L415.7 580.7L416.3 601.8L416.8 581.6L417.4 601.7L417.4 571.5L418.4 571.5L418.5 601.4L419.0 582.7L419.6 601.6L420.1 585.0L420.7 601.8L420.7 576.7L421.7 576.7L421.8 593.9L422.3 584.0L422.9 593.5L423.4 583.4L424.0 593.2L424.5 582.6L425.1 593.6L425.1 579.6L426.1 579.6L426.2 601.4L426.7 588.6L427.3 601.4L427.8 590.2L428.4 601.7L428.4 569.9L429.4 569.9L429.5 601.4L430.0 584.6L430.6 589.9L430.6 565.1L431.6 565.1L431.7 589.0L432.2 573.2L432.8 601.6L433.3 575.6L433.9 601.9L433.9 568.0L434.9 568.0L435.0 601.8L435.5 583.8L436.1 601.9L436.6 583.1L437.2 601.7L437.7 582.6L438.3 595.5L438.8 582.8L439.4 595.1L439.4 557.4L440.4 557.4L440.5 594.7L441.0 581.2L441.6 595.4L442.1 580.9L442.7 601.8L443.2 581.2L443.8 584.4L443.8 571.9L444.8 571.9L444.9 584.9L445.4 584.4L446.0 584.4L446.5 584.4L447.1 601.9L447.1 543.9L448.1 543.9L448.2 584.9L448.7 553.5L449.3 584.5L449.8 554.5L450.4 586.0L450.4 543.0L451.4 543.0L451.5 601.7L452.0 579.2L452.6 601.5L453.1 580.0L453.7 601.5L454.2 578.8L454.8 585.2L455.3 579.7L455.9 583.9L455.9 564.5L456.9 564.5L457.0 601.9L457.5 586.1L458.1 587.7L458.6 585.7L459.2 587.9L459.7 585.3L460.3 588.4L460.3 573.8L461.3 573.8L461.4 601.5L461.9 585.0L462.5 601.9L462.5 569.9L463.5 569.9L463.6 601.5L464.1 587.1L464.7 592.6L465.2 587.9L465.8 594.0L465.8 540.5L466.8 540.5L466.9 592.5L467.4 570.1L468.0 601.6L468.5 570.9L469.1 601.6L469.6 571.7L470.2 601.7L470.2 566.1L471.2 566.1L471.3 601.5L471.8 573.7L472.4 595.9L472.9 573.1L473.5 595.7L474.0 573.4L474.6 601.9L474.6 563.6L475.6 563.6L475.7 601.5L476.2 569.9L476.8 587.9L477.3 569.1L477.9 588.5L478.4 570.3L479.0 588.1L479.0 528.2L480.0 528.2L480.1 601.5L480.6 578.2L481.2 601.3L481.7 577.2L482.3 601.9L482.8 577.3L483.4 601.6L483.9 576.9L484.5 593.9L485.0 579.5L485.6 593.0L485.6 567.4L486.6 567.4L486.7 601.3L487.2 588.8L487.8 601.8L488.3 590.1L488.9 601.7L489.4 588.8L490.0 601.7L490.0 540.1L491.0 540.1L491.1 601.3L491.6 551.4L492.2 601.8L492.2 531.4L493.2 531.4L493.3 592.2L493.8 543.0L494.4 590.8L494.9 541.7L495.5 601.9L495.5 523.7L496.5 523.7L496.6 601.8L497.1 551.0L497.7 601.8L498.2 550.6L498.8 601.9L498.8 471.2L499.8 471.2L499.9 601.4L500.4 568.0L501.0 601.5L501.0 555.5L502.0 555.5L502.1 583.9L502.6 564.2L503.2 585.7L503.7 564.0L504.3 584.9L504.8 562.9L505.4 601.5L505.9 562.4L506.5 601.8L506.5 560.7L507.5 560.7L507.6 601.3L508.1 583.3L508.7 583.3L509.2 583.3L509.8 584.3L510.3 584.3L510.9 584.7L510.9 553.2L511.9 553.2L512.0 583.4L512.5 575.6L513.0 587.1L513.1 560.9L514.1 560.9L514.2 586.5L514.7 575.8L515.2 586.8L515.3 569.0L516.3 569.0L516.4 601.6L516.9 589.6L517.5 601.7L518.0 589.1L518.5 601.4L519.1 590.0L519.7 601.5L520.2 586.6L520.8 586.6L520.8 569.0L521.8 569.0L521.9 584.4L522.4 584.4L523.0 601.6L523.5 588.8L524.0 588.8L524.6 588.8L525.2 589.2L525.7 589.2L526.2 601.7L526.3 566.5L527.3 566.5L527.4 601.8L527.9 582.2L528.5 601.6L529.0 581.5L529.5 588.2L530.1 581.2L530.7 587.4L530.7 570.9L531.7 570.9L531.8 588.4L532.3 587.2L532.9 587.2L532.9 568.0L533.9 568.0L534.0 601.6L534.5 575.3L535.0 601.9L535.1 565.1L536.1 565.1L536.2 601.6L536.7 590.4L537.2 601.9L537.8 589.2L538.4 596.1L538.9 589.9L539.5 596.1L540.0 589.4L540.5 594.7L540.6 544.9L541.6 544.9L541.7 591.6L542.2 577.0L542.8 592.6L543.3 578.2L543.9 592.5L543.9 560.7L544.9 560.7L545.0 601.8L545.5 581.4L546.0 581.6L546.6 581.6L547.2 583.5L547.7 581.8L548.2 601.6L548.3 562.2L549.3 562.2L549.4 601.4L549.9 579.2L550.5 590.7L550.5 553.0L551.5 553.0L551.6 589.9L552.1 570.2L552.7 601.8L553.2 571.6L553.8 601.5L553.8 564.2L554.8 564.2L554.9 601.7L555.4 592.1L556.0 601.7L556.0 575.7L557.0 575.7L557.1 593.3L557.6 581.3L558.2 594.2L558.7 581.4L559.2 593.1L559.8 580.8L560.4 601.3L560.4 559.3L561.4 559.3L561.5 601.6L562.0 567.9L562.6 601.3L563.1 568.8L563.7 583.7L564.2 567.7L564.8 583.9L565.3 568.8L565.9 584.8L565.9 551.3L566.9 551.3L567.0 601.7L567.5 568.9L568.1 601.4L568.6 567.9L569.2 601.4L569.7 568.9L570.2 589.4L570.8 567.3L571.4 588.7L571.4 552.2L572.4 552.2L572.5 588.3L573.0 580.5L573.6 601.7L574.1 580.8L574.7 601.7L575.2 581.1L575.8 601.4L576.3 582.8L576.9 587.2L576.9 565.5L577.9 565.5L578.0 588.9L578.5 574.2L579.1 601.6L579.6 572.9L580.2 601.6L580.2 557.0L581.2 557.0L581.2 601.4L581.8 567.6L582.4 601.9L582.9 567.4L583.5 588.4L583.5 519.9L584.5 519.9L584.6 589.4L585.1 538.1L585.7 587.9L586.2 536.8L586.8 588.0L587.3 536.8L587.9 601.6L588.4 538.3L589.0 601.6L589.0 520.8L590.0 520.8L590.1 601.8L590.6 581.0L591.2 590.4L591.2 568.0L592.2 568.0L592.2 592.2L592.8 580.6L593.4 592.8L593.4 572.8L594.4 572.8L594.5 592.2L595.0 588.5L595.6 601.8L596.1 587.0L596.7 601.4L596.7 580.5L597.7 580.5L597.8 583.6L598.3 581.8L598.9 581.8L599.4 581.8L600.0 582.8L600.5 582.5L601.1 582.7L601.6 582.7L602.2 601.5L602.2 580.5L603.2 580.5L603.2 601.7L603.8 590.4L604.4 601.6L604.4 554.0L605.4 554.0L605.5 601.9L606.0 569.3L606.6 585.5L607.1 569.6L607.7 585.5L608.2 570.4L608.8 585.5L609.3 569.3L609.9 587.3L609.9 549.1L610.9 549.1L611.0 601.5L611.5 580.9L612.1 601.3L612.6 579.2L613.2 582.8L613.2 560.9L614.2 560.9L614.2 584.0L614.8 575.8L615.4 582.7L615.9 576.5L616.5 583.3L617.0 576.4L617.6 597.2L618.1 576.4L618.7 597.1L618.7 570.3L619.7 570.3L619.8 601.6L620.3 589.0L620.9 601.9L620.9 578.6L621.9 578.6L622.0 601.4L622.5 582.8L623.1 601.4L623.6 582.2L624.2 586.9L624.7 580.9L625.2 586.0L625.8 581.5L626.4 584.9L626.4 553.2L627.4 553.2L627.5 586.0L628.0 570.6L628.6 601.4L629.1 570.9L629.7 601.9L629.7 554.5L630.7 554.5L630.8 601.7L631.3 590.7L631.9 601.5L631.9 570.9L632.9 570.9L633.0 588.8L633.5 588.8L634.1 590.1L634.1 574.7L635.1 574.7L635.2 589.4L635.7 585.7L636.2 601.9L636.8 586.1L637.4 601.6L637.9 584.6L638.5 601.7L638.5 574.7L639.5 574.7L639.6 601.6L640.1 586.5L640.7 591.5L640.7 554.9L641.7 554.9L641.8 591.4L642.3 576.8L642.9 591.3L643.4 575.5L644.0 601.9L644.5 576.3L645.1 594.4L645.6 576.6L646.2 594.3L646.2 560.3L647.2 560.3L647.2 595.1L647.8 572.8L648.4 601.7L648.9 571.7L649.5 601.6L650.0 572.6L650.6 591.9L650.6 569.0L651.6 569.0L651.7 589.7L652.2 579.0L652.8 589.8L652.8 560.9L653.8 560.9L653.9 601.7L654.4 590.2L655.0 601.6L655.5 588.5L656.1 601.9L656.1 579.6L657.1 579.6L657.2 601.5L658.2 600.0" fill="none" stroke="#5591e4" stroke-width="2" stroke-linejoin="round"/>
<path d="M750 311.0h1M752 310.8h1M754 309.7h1M755 308.3h1M756 306.9h1M757 305.2h1M757 303.6h1M758 302.0h1M759 300.0h1M759 298.0h1M759 296.0h1M759 294.0h1M760 292.0h1M761 290.1h1M761 288.2h1M761 286.3h1M761 284.4h1M761 282.5h1M761 280.6h1M762 278.6h1M763 276.8h1M764 274.9h1M766 272.5h1M768 270.4h1M770 268.4h1M771 266.6h1M771 264.7h1M772 262.9h1M774 261.7h1M776 260.5h1M778 258.5h1M779 256.6h1M779 254.6h1M780 252.7h1M782 253.6h1M784 255.0h1M785 256.7h1M785 258.4h1M785 260.1h1M786 261.9h1M788 261.1h1M790 258.9h1M791 257.5h1M792 256.1h1M794 255.5h1M795 257.2h1M795 259.0h1M796 260.7h1M798 261.6h1M800 262.5h1M802 262.5h1M804 262.5h1M806 262.5h1M808 262.1h1M810 261.8h1M812 261.2h1M814 259.8h1M815 258.2h1M816 256.6h1M817 255.2h1M818 253.9h1M820 254.2h1M822 254.4h1M824 252.4h1M826 251.1h1M828 252.7h1M830 253.8h1M832 254.0h1M834 256.6h1M836 256.4h1M838 255.2h1M839 253.6h1M840 252.1h1M841 253.7h1M841 255.3h1M842 256.8h1M844 256.5h1M846 255.9h1M847 254.5h1M848 253.0h1M850 254.6h1M852 256.6h1M854 256.0h1M856 255.4h1M858 254.3h1M860 253.1h1M861 251.3h1M862 249.4h1M863 247.9h1M863 246.4h1M864 245.0h1M865 246.9h1M865 248.8h1M865 250.7h1M865 252.6h1M865 254.5h1M866 256.4h1M868 255.8h1M870 255.1h1M872 254.3h1M874 253.5h1M876 252.7h1M878 251.2h1M880 250.1h1M882 250.5h1M884 250.8h1M886 250.5h1M888 250.1h1M889 248.4h1M889 246.7h1M889 245.0h1M890 243.2h1M891 241.6h1M891 240.0h1M891 238.3h1M891 236.7h1M892 235.0h1M893 236.5h1M894 238.0h1M895 239.3h1M895 240.7h1M896 242.0h1M898 242.0h1M900 242.0h1M902 242.0h1M903 244.0h1M904 246.0h1M905 247.4h1M905 248.8h1M906 250.3h1M908 248.9h1M910 247.5h1M912 245.9h1M914 244.2h1M916 243.0h1M918 243.2h1M919 245.1h1M919 247.0h1M920 248.9h1M922 248.7h1M924 246.7h1M925 245.2h1M926 243.7h1M928 241.7h1M930 241.1h1M932 240.4h1M933 239.1h1M933 237.7h1M934 236.3h1M936 234.8h1M938 235.0h1M940 235.1h1M942 235.1h1M944 235.0h1M946 235.0h1M948 235.0h1M950 235.0h1M952 234.9h1M954 234.9h1M956 234.9h1M958 234.9h1M960 234.8h1M962 234.8h1M964 234.1h1M966 232.8h1M968 232.8h1M970 232.8h1M972 232.8h1M974 232.8h1M976 232.8h1M978 232.8h1M980 232.9h1M982 232.9h1M984 232.9h1M986 232.9h1M988 232.9h1M990 232.9h1M992 232.9h1M994 232.9h1M996 232.9h1M998 232.9h1M1000 232.9h1M1002 232.9h1M1004 232.9h1M1006 232.5h1M1008 231.7h1M1010 231.6h1M1012 231.4h1M1014 231.3h1M1016 231.2h1M1018 231.0h1M1020 229.6h1M1022 229.0h1M1024 229.0h1M1026 229.0h1M1028 229.0h1M1030 229.0h1M1032 229.0h1M1034 229.0h1M1036 229.0h1M1038 229.0h1M1040 228.2h1M1041 226.6h1M1042 225.0h1M1043 226.8h1M1044 228.6h1M1046 229.0h1M1048 229.0h1M1050 229.0h1M1052 229.0h1M1054 229.0h1M1056 229.0h1M1058 229.0h1M1060 229.0h1M1062 229.0h1M1064 229.0h1M1066 229.0h1M1068 228.4h1M1070 227.6h1M1071 229.6h1M1071 231.6h1M1071 233.6h1M1072 235.5h1M1074 235.5h1M1076 235.5h1M1078 235.5h1M1080 235.5h1M1082 235.5h1M1084 235.5h1M1086 235.5h1M1088 235.5h1M1090 235.5h1M1092 234.2h1M1094 233.5h1M1096 232.9h1M1098 232.3h1M1100 231.8h1M1102 231.4h1M1104 231.0h1M1106 230.5h1M1108 230.0h1M1110 229.4h1M1112 229.4h1M1114 229.4h1M1116 229.4h1M1118 229.4h1M1120 229.4h1M1122 229.4h1M1124 229.4h1M1126 229.4h1M1128 229.4h1M1130 229.4h1M1132 229.4h1M1134 229.4h1M1136 228.8h1M1138 227.9h1M1140 227.9h1M1142 227.9h1M1144 227.9h1M1146 227.9h1M1148 227.9h1M1150 229.0h1M1151 230.6h1M1151 232.3h1M1151 233.9h1M1152 235.5h1M1154 235.5h1M1156 235.5h1M1158 235.5h1M1160 234.2h1M1162 232.5h1M1164 231.0h1M1165 232.5h1M1165 233.9h1M1166 235.4h1M1168 236.3h1M1170 236.3h1M1172 236.3h1M1174 236.3h1M1176 236.3h1M1177 234.8h1M1178 233.2h1M1180 233.1h1M1182 233.0h1M1184 232.9h1M1186 232.8h1M1188 231.6h1M1190 232.5h1M1191 234.4h1M1192 236.3h1M1194 236.3h1M1196 235.7h1M1198 234.0h1M1200 232.2h1M1202 230.3h1M1204 228.1h1M1206 226.6h1M1208 225.3h1M1210 224.1h1M1212 224.1h1M1214 224.1h1M1216 224.1h1M1218 224.1h1M1220 224.1h1M1222 224.1h1M1224 224.1h1M1226 224.1h1M1228 224.1h1M1230 223.3h1M1232 223.0h1M1234 223.0h1M1236 223.0h1M1238 223.0h1M1240 223.0h1M1242 223.0h1M1244 223.0h1M1246 223.0h1M1248 223.0h1M1250 223.0h1M1252 223.0h1M1254 223.0h1M1256 223.0h1M1258 223.0h1M1260 223.0h1M1262 223.0h1M1264 223.0h1M1266 222.9h1M1268 223.4h1M1269 225.2h1M1269 227.0h1M1269 228.8h1M1270 230.6h1M1272 231.2h1M1274 230.9h1M1276 230.7h1M1278 230.4h1M1280 229.3h1M1282 226.8h1M1284 225.7h1M1286 224.9h1M1288 224.5h1M1290 224.5h1M1292 224.4h1M1294 224.3h1M1296 224.3h1M1298 224.2h1M1300 224.2h1M1302 224.1h1M1304 223.9h1M1306 223.7h1M1308 223.5h1M1310 223.3h1M1312 222.7h1M1314 222.3h1M1316 222.3h1M1318 222.3h1M1320 222.3h1M1321 223.7h1M1321 225.1h1M1322 226.5h1M1323 228.2h1M1323 230.0h1M1324 231.7h1M1326 231.7h1M1328 231.7h1M1329 229.8h1M1330 227.8h1M1332 227.0h1M1334 226.2h1M1336 226.5h1M1338 226.9h1M1340 227.0h1M1342 226.7h1M1344 226.4h1M1346 226.1h1M1348 225.6h1M1349 227.2h1M1349 228.8h1M1349 230.5h1M1350 232.1h1M1352 229.9h1M1353 228.2h1M1354 226.4h1" fill="none" stroke="#5591e4" stroke-width="1.5" opacity="0.9"/>
<path d="M748 332.8H762.5V322.9L1000 322.5 L1355 322" fill="none" stroke="#5591e4" stroke-width="2" stroke-dasharray="5 3"/>
<path d="M748 343.2H755L756.5 344.5H1355" fill="none" stroke="#e0445f" stroke-width="2"/>
</svg>

<div id="reco"><span>RECOMMENDATIONS</span>
<svg width="28" height="20" viewBox="0 0 28 20" fill="none" stroke="#fff" stroke-width="3" stroke-linecap="round" stroke-linejoin="round"><path d="M3.8 14.5 L13.2 5.8 L22.6 14.5"/></svg>
</div>
</body>
</html>
